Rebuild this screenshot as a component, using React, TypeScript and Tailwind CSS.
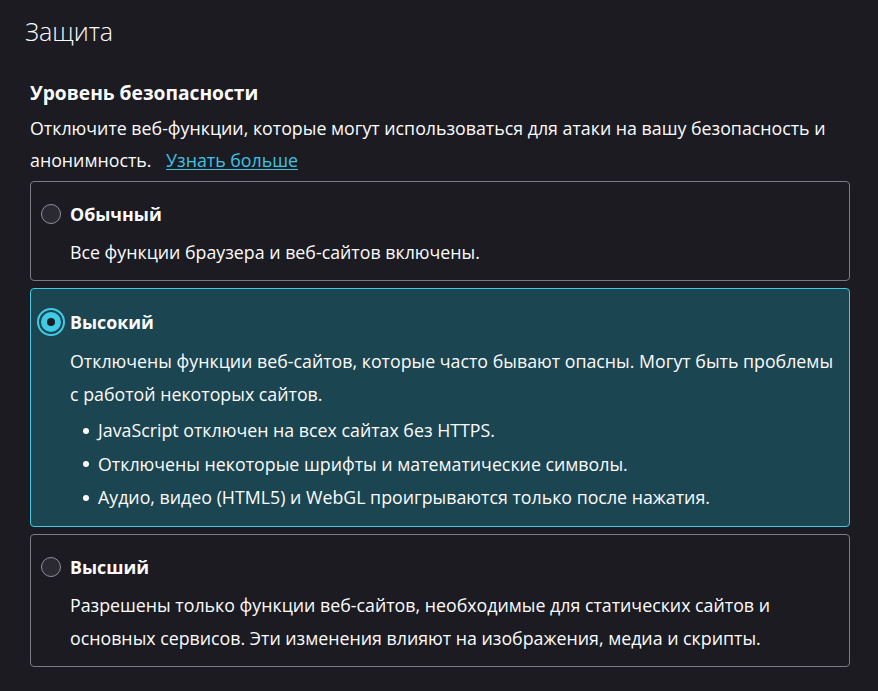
import React from 'react';

const font = { fontFamily: '"Open Sans", "Noto Sans", sans-serif' };

interface Level {
  id: string;
  title: string;
  desc: string;
  bullets?: string[];
}

const LEVELS: Level[] = [
  {
    id: 'standard',
    title: 'Обычный',
    desc: 'Все функции браузера и веб-сайтов включены.',
  },
  {
    id: 'safer',
    title: 'Высокий',
    desc: 'Отключены функции веб-сайтов, которые часто бывают опасны. Могут быть проблемы с работой некоторых сайтов.',
    bullets: [
      'JavaScript отключен на всех сайтах без HTTPS.',
      'Отключены некоторые шрифты и математические символы.',
      'Аудио, видео (HTML5) и WebGL проигрываются только после нажатия.',
    ],
  },
  {
    id: 'safest',
    title: 'Высший',
    desc: 'Разрешены только функции веб-сайтов, необходимые для статических сайтов и основных сервисов. Эти изменения влияют на изображения, медиа и скрипты.',
  },
];

const Radio = ({ checked }: { checked: boolean }) =>
  checked ? (
    <span className="w-5 h-5 rounded-full bg-[#3fcbe6] flex items-center justify-center shrink-0 outline-2 outline-offset-2 outline-[#3fcbe6]">
      <span className="w-2 h-2 rounded-full bg-[#1c1b22]" />
    </span>
  ) : (
    <span className="w-5 h-5 rounded-full bg-[#2b2a33] border border-[#8f8f9d] shrink-0" />
  );

export default function App() {
  const selected = 'safer';

  return (
    <div className="min-h-screen bg-[#1c1b22] text-[#fbfbfe] pt-[14px]" style={font}>
      <h1 className="ml-[25px] text-[25px] leading-[34px] font-light">Защита</h1>

      <div className="ml-[30px] w-[820px] mt-[32px]">
        <h2 className="text-[19.2px] leading-[26px] font-bold">Уровень безопасности</h2>
        <p className="mt-[6px] text-[17.8px] leading-[32px]">
          Отключите веб-функции, которые могут использоваться для атаки на вашу безопасность и
          анонимность.{' '}
          <a href="#" className="ml-[10px] text-[#3ec3e2] underline underline-offset-2">
            Узнать больше
          </a>
        </p>

        <div className="mt-[5px] flex flex-col gap-[7px]">
          {LEVELS.map(level => {
            const active = level.id === selected;
            return (
              <div
                key={level.id}
                className={
                  active
                    ? 'rounded-[4px] border border-[#3fcbe6] bg-[#1b4550] pl-[10px] pr-[6px] pt-[21px] pb-[11px]'
                    : 'rounded-[4px] border border-[#7c7b84] bg-[#1c1b22] pl-[10px] pr-[6px] pt-[20px] pb-[11px]'
                }
              >
                <div className="flex items-center gap-[9px]">
                  <Radio checked={active} />
                  <span className="text-[17.8px] leading-[24px] font-bold">{level.title}</span>
                </div>
                <div
                  className={
                    active
                      ? 'ml-[29px] mt-[11px] text-[17.8px] leading-[33px]'
                      : 'ml-[29px] mt-[10px] text-[17.8px] leading-[33px]'
                  }
                >
                  <p>{level.desc}</p>
                  {level.bullets && (
                    <ul className="mt-[3px]">
                      {level.bullets.map(b => (
                        <li key={b} className="flex items-center leading-[33.5px]">
                          <span className="ml-[13px] mr-[9px] w-[6px] h-[6px] rounded-full bg-[#fbfbfe] shrink-0" />
                          {b}
                        </li>
                      ))}
                    </ul>
                  )}
                </div>
              </div>
            );
          })}
        </div>
      </div>
    </div>
  );
}
